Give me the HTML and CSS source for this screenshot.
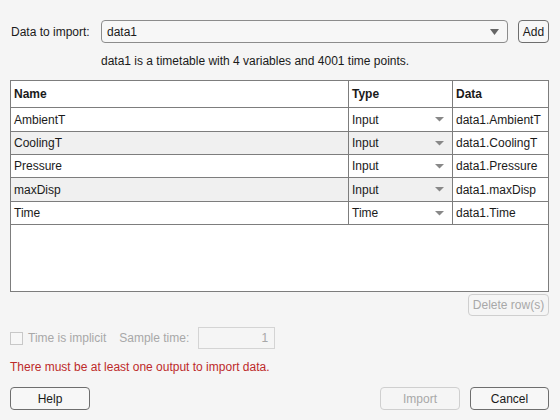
FILE: index.html
```html
<!DOCTYPE html>
<html>
<head>
<meta charset="utf-8">
<link rel="stylesheet" href="styles.css">
</head>
<body>
<div class="dlg">
  <div class="src-row">
    <span class="src-label">Data to import:</span>
    <div class="combo">
      <span>data1</span>
      <svg class="arrow" width="9" height="6" viewBox="0 0 9 6"><path d="M0 0H9L4.5 6Z" fill="#666"/></svg>
    </div>
    <button class="btn add">Add</button>
  </div>
  <div class="info">data1 is a timetable with 4 variables and 4001 time points.</div>

  <div class="table">
    <div class="row head">
      <div class="c name">Name</div>
      <div class="c type">Type</div>
      <div class="c data">Data</div>
    </div>
    <div class="row r1">
      <div class="c name">AmbientT</div>
      <div class="c type"><span>Input</span><svg width="9" height="5" viewBox="0 0 9 5"><path d="M0 0H9L4.5 4.5Z" fill="#888"/></svg></div>
      <div class="c data">data1.AmbientT</div>
    </div>
    <div class="row r2 alt">
      <div class="c name">CoolingT</div>
      <div class="c type"><span>Input</span><svg width="9" height="5" viewBox="0 0 9 5"><path d="M0 0H9L4.5 4.5Z" fill="#888"/></svg></div>
      <div class="c data">data1.CoolingT</div>
    </div>
    <div class="row r3">
      <div class="c name">Pressure</div>
      <div class="c type"><span>Input</span><svg width="9" height="5" viewBox="0 0 9 5"><path d="M0 0H9L4.5 4.5Z" fill="#888"/></svg></div>
      <div class="c data">data1.Pressure</div>
    </div>
    <div class="row r4 alt">
      <div class="c name">maxDisp</div>
      <div class="c type"><span>Input</span><svg width="9" height="5" viewBox="0 0 9 5"><path d="M0 0H9L4.5 4.5Z" fill="#888"/></svg></div>
      <div class="c data">data1.maxDisp</div>
    </div>
    <div class="row r5">
      <div class="c name">Time</div>
      <div class="c type"><span>Time</span><svg width="9" height="5" viewBox="0 0 9 5"><path d="M0 0H9L4.5 4.5Z" fill="#888"/></svg></div>
      <div class="c data">data1.Time</div>
    </div>
    <div class="empty"></div>
  </div>

  <div class="del-row">
    <button class="btn disabled del">Delete row(s)</button>
  </div>

  <div class="opt-row">
    <span class="check"></span>
    <span class="muted implicit">Time is implicit</span>
    <span class="muted sample">Sample time:</span>
    <div class="num">1</div>
  </div>

  <div class="error">There must be at least one output to import data.</div>

  <div class="foot">
    <button class="btn wide">Help</button>
    <div class="spacer"></div>
    <button class="btn wide disabled">Import</button>
    <button class="btn wide">Cancel</button>
  </div>
</div>
</body>
</html>
```

FILE: styles.css
```css
html, body {
  margin: 0;
  padding: 0;
  background: #f5f5f5;
  width: 560px;
  height: 420px;
  overflow: hidden;
}
body {
  font-family: "Liberation Sans", Arial, sans-serif;
  font-size: 12px;
  color: #1a1a1a;
}
.dlg {
  padding: 20px 11px 0 10px;
  display: flex;
  flex-direction: column;
}
.src-row {
  display: flex;
  align-items: center;
  height: 23px;
}
.src-label {
  width: 90px;
  padding-left: 1px;
}
.combo {
  flex: 1;
  height: 23px;
  box-sizing: border-box;
  border: 1px solid #8c8c8c;
  border-radius: 4px;
  background: #f7f7f7;
  display: flex;
  align-items: center;
  justify-content: space-between;
  padding: 0 8px 0 5px;
  margin-right: 10px;
}
.btn {
  font-family: "Liberation Sans", Arial, sans-serif;
  font-size: 12px;
  color: #1a1a1a;
  background: #f7f7f7;
  border: 1px solid #6e6e6e;
  border-radius: 4px;
  box-sizing: border-box;
  height: 23px;
  padding: 0;
  margin: 0;
}
.add {
  width: 31px;
}
.info {
  margin: 10px 0 0 91px;
  height: 16px;
  line-height: 16px;
}
.table {
  margin-top: 11px;
  border: 1px solid #7d7d7d;
  background: #fff;
  height: 212px;
  box-sizing: border-box;
  display: flex;
  flex-direction: column;
}
.row {
  display: flex;
  border-bottom: 1px solid #7d7d7d;
  box-sizing: border-box;
  background: #fff;
}
.row.alt .name, .row.alt .type {
  background: #f0f0f0;
}
.head { height: 27px; font-weight: bold; }
.r1 { height: 24px; }
.r2 { height: 23px; }
.r3 { height: 23px; }
.r4 { height: 24px; }
.r5 { height: 23px; }
.c {
  display: flex;
  align-items: center;
  padding-left: 3px;
  box-sizing: border-box;
}
.name {
  width: 338px;
  border-right: 1px solid #7d7d7d;
}
.type {
  width: 104px;
  border-right: 1px solid #7d7d7d;
  justify-content: space-between;
  padding-right: 8px;
}
.data {
  flex: 1;
}
.empty {
  flex: 1;
}
.del-row {
  display: flex;
  justify-content: flex-end;
  margin-top: 2px;
}
.disabled {
  color: #a8a8a8;
  border-color: #cfcfcf;
  background: #f5f5f5;
}
.del {
  width: 81px;
  height: 22px;
}
.opt-row {
  display: flex;
  align-items: center;
  margin-top: 11px;
  height: 22px;
}
.check {
  width: 13px;
  height: 13px;
  box-sizing: border-box;
  border: 1px solid #c8c8c8;
  background: #f7f7f7;
}
.muted {
  color: #a8a8a8;
}
.implicit {
  margin-left: 5px;
}
.sample {
  margin-left: 13px;
}
.num {
  margin-left: 9px;
  width: 77px;
  height: 22px;
  box-sizing: border-box;
  border: 1px solid #d4d4d4;
  color: #a8a8a8;
  display: flex;
  align-items: center;
  justify-content: flex-end;
  padding-right: 6px;
}
.error {
  margin-top: 10px;
  height: 16px;
  line-height: 16px;
  color: #bd2a2a;
}
.foot {
  display: flex;
  margin-top: 12px;
  gap: 10px;
}
.wide {
  width: 80px;
}
.foot .btn:last-child {
  width: 79px;
}
.spacer {
  flex: 1;
}
```
